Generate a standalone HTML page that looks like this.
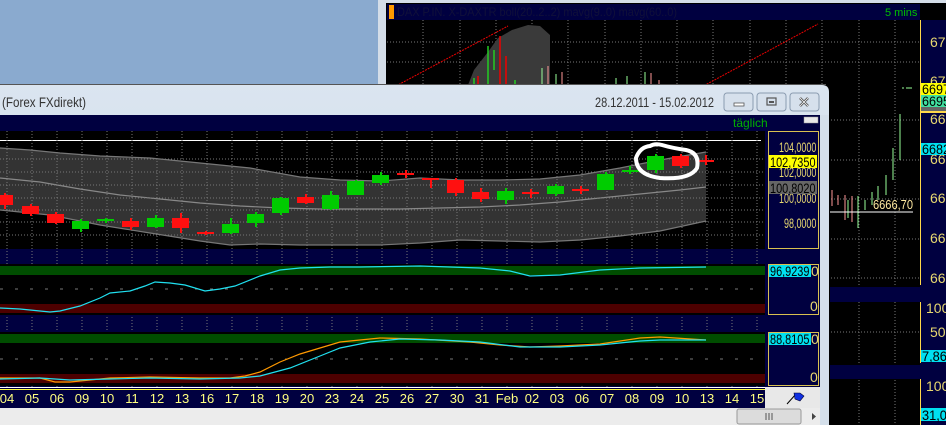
<!DOCTYPE html>
<html><head><meta charset="utf-8"><style>
html,body{margin:0;padding:0;background:#8aaacf;}
svg{display:block;font-family:"Liberation Sans",sans-serif;}
</style></head><body>
<svg width="946" height="425" viewBox="0 0 946 425" xmlns="http://www.w3.org/2000/svg">
<rect x="0" y="0" width="946" height="425" fill="#8aaacf"/>
<rect x="378" y="0" width="568" height="425" fill="#d4dde8"/>
<rect x="386" y="3" width="560" height="422" fill="#000"/>
<rect x="387" y="4" width="533" height="16" fill="#000040"/>
<rect x="389" y="5" width="5" height="14" fill="#ff9900"/>
<text x="397" y="16" font-size="12" fill="#10103a" textLength="280" lengthAdjust="spacingAndGlyphs">DAX P.IN. X-DAXTR boll(20..2..2) mavg(9..0) mavg(60..0)</text>
<text x="885" y="16" font-size="11" fill="#00c000">5 mins</text>
<g stroke="#777" stroke-dasharray="1 2">
<line x1="387" y1="42" x2="920" y2="42"/><line x1="387" y1="62" x2="920" y2="62"/>
<line x1="387" y1="120" x2="920" y2="120"/><line x1="387" y1="160" x2="920" y2="160"/>
<line x1="387" y1="199" x2="920" y2="199"/><line x1="387" y1="239" x2="920" y2="239"/>
<line x1="387" y1="278" x2="920" y2="278"/><line x1="387" y1="332" x2="920" y2="332"/>
<line x1="423" y1="20" x2="423" y2="90"/><line x1="460" y1="20" x2="460" y2="90"/>
<line x1="496" y1="20" x2="496" y2="90"/><line x1="532" y1="20" x2="532" y2="90"/>
<line x1="568" y1="20" x2="568" y2="90"/><line x1="605" y1="20" x2="605" y2="90"/>
<line x1="641" y1="20" x2="641" y2="90"/><line x1="677" y1="20" x2="677" y2="90"/>
<line x1="713" y1="20" x2="713" y2="90"/><line x1="750" y1="20" x2="750" y2="90"/>
<line x1="786" y1="20" x2="786" y2="90"/><line x1="822" y1="20" x2="822" y2="90"/>
<line x1="859" y1="20" x2="859" y2="425"/><line x1="895" y1="20" x2="895" y2="425"/>
</g>
<path d="M466,90 L474,70 L488,52 L498,38 L512,30 L528,25 L540,26 L550,35 L550,90 Z" fill="#3a3a3a"/>
<line x1="396" y1="86" x2="508" y2="26" stroke="#e00" stroke-dasharray="2 1"/>
<line x1="696" y1="90" x2="818" y2="24" stroke="#e00" stroke-dasharray="2 1"/>
<g stroke="#22cc22" stroke-width="1.5"><line x1="488" y1="46" x2="488" y2="90"/><line x1="494" y1="50" x2="494" y2="70"/><line x1="515" y1="80" x2="515" y2="90"/><line x1="474" y1="78" x2="474" y2="90"/></g>
<g stroke="#e00" stroke-width="1.5"><line x1="500" y1="36" x2="500" y2="90"/><line x1="506" y1="56" x2="506" y2="90"/><line x1="478" y1="76" x2="478" y2="90"/></g>
<g stroke="#9f9" stroke-width="1"><line x1="542" y1="68" x2="542" y2="90"/><line x1="556" y1="74" x2="556" y2="90"/><line x1="616" y1="78" x2="616" y2="90"/><line x1="627" y1="76" x2="627" y2="90"/><line x1="645" y1="72" x2="645" y2="90"/></g>
<g stroke="#f99" stroke-width="1"><line x1="548" y1="66" x2="548" y2="90"/><line x1="562" y1="72" x2="562" y2="90"/><line x1="651" y1="73" x2="651" y2="90"/><line x1="659" y1="80" x2="659" y2="90"/></g>
<g stroke="#9f9" stroke-width="1"><line x1="900" y1="114" x2="900" y2="160"/><line x1="893" y1="148" x2="893" y2="180"/><line x1="886" y1="175" x2="886" y2="195"/><line x1="878" y1="186" x2="878" y2="200"/><line x1="872" y1="192" x2="872" y2="205"/><line x1="858" y1="196" x2="858" y2="228"/><line x1="865" y1="200" x2="865" y2="210"/><line x1="906" y1="88" x2="912" y2="88"/><line x1="902" y1="88" x2="904" y2="88"/><line x1="848" y1="200" x2="848" y2="218"/></g>
<g stroke="#f99" stroke-width="1"><line x1="832" y1="190" x2="832" y2="206"/><line x1="838" y1="195" x2="838" y2="205"/><line x1="845" y1="195" x2="845" y2="220"/><line x1="852" y1="196" x2="852" y2="222"/></g>
<line x1="830" y1="212" x2="913" y2="212" stroke="#fff"/>
<text x="873" y="209" font-size="13" fill="#ffe9a0" textLength="40" lengthAdjust="spacingAndGlyphs">6666,70</text>
<rect x="830" y="287" width="90" height="15" fill="#000040"/>
<rect x="830" y="365" width="90" height="14" fill="#000040"/>
<rect x="920" y="20" width="26" height="405" fill="#000040"/>
<line x1="920.5" y1="20" x2="920.5" y2="285" stroke="#ffd84a"/>
<line x1="920.5" y1="302" x2="920.5" y2="363" stroke="#ffd84a"/>
<line x1="920.5" y1="379" x2="920.5" y2="425" stroke="#ffd84a"/>
<g font-size="14" fill="#e8d870">
<text x="930" y="47">671</text><text x="930" y="86">670</text><text x="930" y="124">669</text>
<text x="930" y="164">668</text><text x="930" y="203">667</text><text x="930" y="243">666</text>
<text x="930" y="283">665</text><text x="926" y="313">100,</text><text x="930" y="337">50,</text>
<text x="926" y="391">100,</text></g>
<rect x="921" y="83" width="25" height="12" fill="#ffff00"/><text x="922" y="94" font-size="14" fill="#000" textLength="28" lengthAdjust="spacingAndGlyphs">6697</text>
<rect x="921" y="95" width="25" height="12" fill="#40e0a0"/><text x="922" y="106" font-size="14" fill="#000" textLength="28" lengthAdjust="spacingAndGlyphs">6695</text>
<rect x="921" y="107" width="25" height="5" fill="#666"/>
<line x1="920" y1="112" x2="946" y2="112" stroke="#ffd84a" stroke-width="2"/>
<rect x="921" y="143" width="25" height="12" fill="#00e0f0"/><text x="922" y="154" font-size="14" fill="#000" textLength="28" lengthAdjust="spacingAndGlyphs">6682</text>
<rect x="921" y="350" width="25" height="12" fill="#00e0f0"/><text x="922" y="361" font-size="14" fill="#000" textLength="32" lengthAdjust="spacingAndGlyphs">7,869</text>
<rect x="921" y="408" width="25" height="13" fill="#00e0f0"/><text x="922" y="420" font-size="14" fill="#000" textLength="32" lengthAdjust="spacingAndGlyphs">31,07</text>

<line x1="0" y1="84.5" x2="826" y2="84.5" stroke="#555"/>
<defs><linearGradient id="tb" x1="0" y1="0" x2="0" y2="1"><stop offset="0" stop-color="#dbe5f0"/><stop offset="1" stop-color="#c3d3e3"/></linearGradient></defs>
<path d="M0,85 L822,85 Q829,85 829,92 L829,425 L0,425 Z" fill="url(#tb)"/>
<text x="2" y="107" font-size="14" fill="#333" textLength="84" lengthAdjust="spacingAndGlyphs">(Forex FXdirekt)</text>
<text x="595" y="107" font-size="14" fill="#333" textLength="119" lengthAdjust="spacingAndGlyphs">28.12.2011 - 15.02.2012</text>
<g fill="#d6e0ec" stroke="#8a9bb0"><rect x="724" y="93" width="29" height="18" rx="3"/><rect x="757" y="93" width="29" height="18" rx="3"/><rect x="790" y="93" width="29" height="18" rx="3"/></g>
<rect x="734" y="103" width="10" height="3" fill="#fff" stroke="#555" stroke-width="0.8"/>
<rect x="767" y="98" width="9" height="7" fill="none" stroke="#555" stroke-width="1.2"/><rect x="769" y="101" width="5" height="2" fill="#555"/>
<path d="M800,98 L808,106 M808,98 L800,106" stroke="#555" stroke-width="2.5"/>
<path d="M800,98 L808,106 M808,98 L800,106" stroke="#fff" stroke-width="0.8"/>
<rect x="0" y="115" width="820" height="293" fill="#000040"/>
<text x="733" y="127" font-size="12" fill="#00b000">täglich</text>
<rect x="804" y="117" width="14" height="6" fill="#e8e8e8" stroke="#999" stroke-width="0.5"/>
<rect x="0" y="131" width="765" height="118" fill="#000"/>
<line x1="0" y1="140.5" x2="761" y2="140.5" stroke="#fff"/>
<path d="M0,148 L30,150 L60,153 L100,156 L150,158 L200,163 L250,168 L300,177 L340,180 L380,181 L420,178 L460,180 L500,180 L540,179 L580,175 L620,168 L660,160 L706,152 L706,221 L660,231 L620,236 L580,240 L540,242 L500,241 L460,240 L420,243 L380,245 L340,245 L300,245 L260,244 L230,245 L200,241 L150,233 L100,225 L50,215 L0,210 Z" fill="#333"/>
<polyline fill="none" stroke="#777" stroke-width="1.2" points="0,148 30,150 60,153 100,156 150,158 200,163 250,168 300,177 340,180 380,181 420,178 460,180 500,180 540,179 580,175 620,168 660,160 706,152"/>
<polyline fill="none" stroke="#777" stroke-width="1.2" points="0,210 50,215 100,225 150,233 200,241 230,245 260,244 300,245 340,245 380,245 420,243 460,240 500,241 540,242 580,240 620,236 660,231 706,221"/>
<polyline fill="none" stroke="#888" stroke-width="1.2" points="0,178 40,182 80,189 120,195 160,199 200,203 240,206 280,208 320,209 360,209 400,209 440,208 480,207 520,205 560,202 600,198 640,194 680,190 706,187"/>
<g stroke="#777" stroke-dasharray="1 2">
<line x1="0" y1="159" x2="765" y2="159"/><line x1="0" y1="172" x2="765" y2="172"/><line x1="0" y1="185" x2="765" y2="185"/>
<line x1="0" y1="198" x2="765" y2="198"/><line x1="0" y1="210" x2="765" y2="210"/><line x1="0" y1="222" x2="765" y2="222"/><line x1="0" y1="235" x2="765" y2="235"/>
</g>
<g stroke="#777" stroke-dasharray="1 2">
<line x1="7" y1="131" x2="7" y2="388"/><line x1="32" y1="131" x2="32" y2="388"/><line x1="57" y1="131" x2="57" y2="388"/><line x1="82" y1="131" x2="82" y2="388"/><line x1="107" y1="131" x2="107" y2="388"/><line x1="132" y1="131" x2="132" y2="388"/><line x1="157" y1="131" x2="157" y2="388"/><line x1="182" y1="131" x2="182" y2="388"/><line x1="207" y1="131" x2="207" y2="388"/><line x1="232" y1="131" x2="232" y2="388"/><line x1="257" y1="131" x2="257" y2="388"/><line x1="282" y1="131" x2="282" y2="388"/><line x1="307" y1="131" x2="307" y2="388"/><line x1="332" y1="131" x2="332" y2="388"/><line x1="357" y1="131" x2="357" y2="388"/><line x1="382" y1="131" x2="382" y2="388"/><line x1="407" y1="131" x2="407" y2="388"/><line x1="432" y1="131" x2="432" y2="388"/><line x1="457" y1="131" x2="457" y2="388"/><line x1="482" y1="131" x2="482" y2="388"/><line x1="507" y1="131" x2="507" y2="388"/><line x1="532" y1="131" x2="532" y2="388"/><line x1="557" y1="131" x2="557" y2="388"/><line x1="582" y1="131" x2="582" y2="388"/><line x1="607" y1="131" x2="607" y2="388"/><line x1="632" y1="131" x2="632" y2="388"/><line x1="657" y1="131" x2="657" y2="388"/><line x1="682" y1="131" x2="682" y2="388"/><line x1="707" y1="131" x2="707" y2="388"/><line x1="732" y1="131" x2="732" y2="388"/><line x1="757" y1="131" x2="757" y2="388"/>
</g>
<g fill="#ff1010" stroke="#ff1010" stroke-width="2">
<rect x="-2" y="195" width="15" height="10" stroke="none"/><line x1="5" y1="193" x2="5" y2="209"/>
<rect x="22" y="206" width="17" height="8" stroke="none"/><line x1="31" y1="204" x2="31" y2="216"/>
<rect x="47" y="214" width="17" height="9" stroke="none"/><line x1="56" y1="212" x2="56" y2="224"/>
<rect x="122" y="221" width="17" height="6" stroke="none"/><line x1="131" y1="218" x2="131" y2="230"/>
<rect x="172" y="218" width="17" height="10" stroke="none"/><line x1="181" y1="213" x2="181" y2="233"/>
<rect x="197" y="232" width="17" height="2" stroke="none"/><line x1="206" y1="231" x2="206" y2="235"/>
<rect x="297" y="197" width="17" height="6" stroke="none"/><line x1="306" y1="194" x2="306" y2="204"/>
<rect x="397" y="173" width="17" height="2" stroke="none"/><line x1="406" y1="170" x2="406" y2="178"/>
<rect x="422" y="178" width="17" height="2" stroke="none"/><line x1="431" y1="178" x2="431" y2="188"/>
<rect x="447" y="180" width="17" height="13" stroke="none"/><line x1="456" y1="178" x2="456" y2="196"/>
<rect x="472" y="192" width="17" height="7" stroke="none"/><line x1="481" y1="188" x2="481" y2="202"/>
<rect x="522" y="192" width="17" height="2" stroke="none"/><line x1="531" y1="189" x2="531" y2="198"/>
<rect x="572" y="189" width="17" height="2" stroke="none"/><line x1="581" y1="186" x2="581" y2="194"/>
<rect x="672" y="156" width="17" height="10" stroke="none"/><line x1="681" y1="154" x2="681" y2="168"/>
<rect x="697" y="160" width="17" height="2" stroke="none"/><line x1="706" y1="155" x2="706" y2="165"/>
</g>
<g fill="#00cc00" stroke="#00cc00" stroke-width="2">
<rect x="72" y="221" width="17" height="8" stroke="none"/><line x1="81" y1="219" x2="81" y2="232"/>
<rect x="97" y="219" width="17" height="2" stroke="none"/><line x1="106" y1="218" x2="106" y2="223"/>
<rect x="147" y="218" width="17" height="9" stroke="none"/><line x1="156" y1="215" x2="156" y2="228"/>
<rect x="222" y="224" width="17" height="9" stroke="none"/><line x1="231" y1="218" x2="231" y2="234"/>
<rect x="247" y="214" width="17" height="9" stroke="none"/><line x1="256" y1="212" x2="256" y2="227"/>
<rect x="272" y="198" width="17" height="15" stroke="none"/><line x1="281" y1="197" x2="281" y2="215"/>
<rect x="322" y="195" width="17" height="14" stroke="none"/><line x1="331" y1="191" x2="331" y2="210"/>
<rect x="347" y="181" width="17" height="14" stroke="none"/><line x1="356" y1="180" x2="356" y2="195"/>
<rect x="372" y="175" width="17" height="8" stroke="none"/><line x1="381" y1="172" x2="381" y2="185"/>
<rect x="497" y="191" width="17" height="9" stroke="none"/><line x1="506" y1="188" x2="506" y2="204"/>
<rect x="547" y="186" width="17" height="8" stroke="none"/><line x1="556" y1="184" x2="556" y2="196"/>
<rect x="597" y="174" width="17" height="16" stroke="none"/><line x1="606" y1="172" x2="606" y2="190"/>
<rect x="622" y="170" width="17" height="2" stroke="none"/><line x1="630" y1="166" x2="630" y2="174"/>
<rect x="647" y="156" width="17" height="14" stroke="none"/><line x1="656" y1="154" x2="656" y2="173"/>
</g>
<path d="M650,146 Q640,147 636,158 Q636,175 660,178 Q690,180 697,168 Q700,153 686,150 Q672,148 662,145 Q655,143 650,146 Z" fill="none" stroke="#fff" stroke-width="4"/>
<rect x="768.5" y="131.5" width="50" height="117" fill="#000040" stroke="#d8c050"/>
<g font-size="14" fill="#e8d870">
<text transform="translate(779,152) scale(0.64,1)">104,0000</text>
<text transform="translate(779,177) scale(0.64,1)">102,0000</text>
<text transform="translate(779,203) scale(0.64,1)">100,0000</text>
<text transform="translate(784,228) scale(0.64,1)">98,0000</text></g>
<rect x="769" y="155" width="48" height="13" fill="#ffff00"/><text transform="translate(770,167) scale(0.78,1)" font-size="14" fill="#000">102,7350</text>
<rect x="769" y="181" width="48" height="13" fill="#666"/><text transform="translate(770,193) scale(0.78,1)" font-size="14" fill="#000">100,8020</text>
<rect x="0" y="264" width="765" height="51" fill="#000"/>
<rect x="0" y="266" width="765" height="9" fill="#004d00"/>
<rect x="0" y="304" width="765" height="9" fill="#4d0000"/>
<line x1="0" y1="289" x2="765" y2="289" stroke="#777" stroke-dasharray="3 12"/>
<polyline fill="none" stroke="#20e0f0" stroke-width="1.2" points="0,308 20,309 50,312 60,311 80,306 100,298 110,293 130,291 145,286 155,282 170,283 185,285 205,291 220,289 235,286 260,276 280,270 300,268 330,267 360,267 420,266 480,268 510,271 530,276 560,275 600,270 640,268 706,267"/>
<rect x="768.5" y="264.5" width="50" height="50" fill="#000040" stroke="#d8c050"/>
<rect x="769" y="265" width="42" height="12" fill="#00e0f0"/><text transform="translate(770,276) scale(0.78,1)" font-size="14" fill="#000">96,9239</text>
<text x="811" y="276" font-size="14" fill="#e8d870">0</text><text x="810" y="311" font-size="14" fill="#e8d870">0</text>
<rect x="0" y="332" width="765" height="54" fill="#000"/>
<rect x="0" y="334" width="765" height="9" fill="#004d00"/>
<rect x="0" y="374" width="765" height="9" fill="#4d0000"/>
<line x1="0" y1="359" x2="765" y2="359" stroke="#777" stroke-dasharray="3 12"/>
<polyline fill="none" stroke="#ff9900" stroke-width="1.2" points="0,378 40,378 55,382 70,382 90,380 110,378 150,377 200,378 230,378 245,376 260,372 280,362 300,354 320,348 340,342 380,338 420,339 470,342 500,345 530,347 560,346 600,344 640,338 660,337 706,340"/>
<polyline fill="none" stroke="#20e0f0" stroke-width="1.2" points="0,379 40,378 70,380 110,379 150,378 200,379 240,378 260,376 290,368 320,356 340,348 370,342 400,339 440,340 480,342 520,347 560,347 600,345 640,341 660,340 706,340"/>
<rect x="768.5" y="332.5" width="50" height="53" fill="#000040" stroke="#d8c050"/>
<rect x="769" y="333" width="42" height="12" fill="#00e0f0"/><text transform="translate(770,344) scale(0.78,1)" font-size="14" fill="#000">88,8105</text>
<text x="811" y="344" font-size="14" fill="#e8d870">0</text><text x="810" y="382" font-size="14" fill="#e8d870">0</text>
<line x1="0" y1="387.5" x2="765" y2="387.5" stroke="#fff"/>
<line x1="0" y1="389.5" x2="765" y2="389.5" stroke="#ffff40"/>
<rect x="0" y="390" width="765" height="17" fill="#000040"/>
<rect x="765" y="387" width="55" height="21" fill="#e8e8e8"/>
<path d="M787,404 L796,394" stroke="#000" stroke-width="1"/>
<path d="M794,393 L800,393 L804,396 L800,401 L795,399 Z" fill="#1030e0" stroke="#000030" stroke-width="0.6"/>
<g font-size="13" fill="#ffff80" text-anchor="middle">
<text x="7" y="403">04</text><text x="32" y="403">05</text><text x="57" y="403">06</text><text x="82" y="403">09</text><text x="107" y="403">10</text><text x="132" y="403">11</text><text x="157" y="403">12</text><text x="182" y="403">13</text><text x="207" y="403">16</text><text x="232" y="403">17</text><text x="257" y="403">18</text><text x="282" y="403">19</text><text x="307" y="403">20</text><text x="332" y="403">23</text><text x="357" y="403">24</text><text x="382" y="403">25</text><text x="407" y="403">26</text><text x="432" y="403">27</text><text x="457" y="403">30</text><text x="482" y="403">31</text><text x="507" y="403">Feb</text><text x="532" y="403">02</text><text x="557" y="403">03</text><text x="582" y="403">06</text><text x="607" y="403">07</text><text x="632" y="403">08</text><text x="657" y="403">09</text><text x="682" y="403">10</text><text x="707" y="403">13</text><text x="732" y="403">14</text><text x="757" y="403">15</text>
</g>
<rect x="0" y="408" width="820" height="17" fill="#ececec"/>
<rect x="737" y="409" width="64" height="15" rx="2" fill="#dcdcdc" stroke="#999"/>
<path d="M766,413 v7 M769,413 v7 M772,413 v7" stroke="#555"/>
<path d="M812,413 L816,416.5 L812,420 Z" fill="#444"/>
<rect x="820" y="115" width="9" height="310" fill="#d4dfea"/>
</svg>
</body></html>
